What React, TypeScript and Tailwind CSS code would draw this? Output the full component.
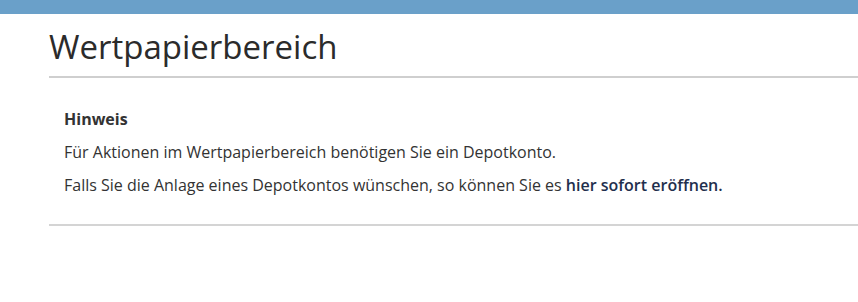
export default function App() {
  return (
    <div className="min-h-[302px] bg-white font-['Open_Sans',sans-serif] text-[#333]">
      <div className="h-[14px] bg-[#6aa0c9]" />
      <div className="pl-[49px]">
        <h1 className="pt-[13px] pb-[9px] text-[33px] leading-[40px] font-medium text-[#2b2b2b] border-b-2 border-[#cfcfcf]">
          Wertpapierbereich
        </h1>
        <div className="px-[15px] pt-[30px] pb-[28px] border-b-2 border-[#d4d4d4] text-[16px] leading-[22px]">
          <p className="font-bold mb-[11px]">Hinweis</p>
          <p className="mb-[11px]">Für Aktionen im Wertpapierbereich benötigen Sie ein Depotkonto.</p>
          <p>
            Falls Sie die Anlage eines Depotkontos wünschen, so können Sie es{' '}
            <a href="#" className="font-semibold text-[#1f2f4d]">hier sofort eröffnen.</a>
          </p>
        </div>
      </div>
    </div>
  );
}
